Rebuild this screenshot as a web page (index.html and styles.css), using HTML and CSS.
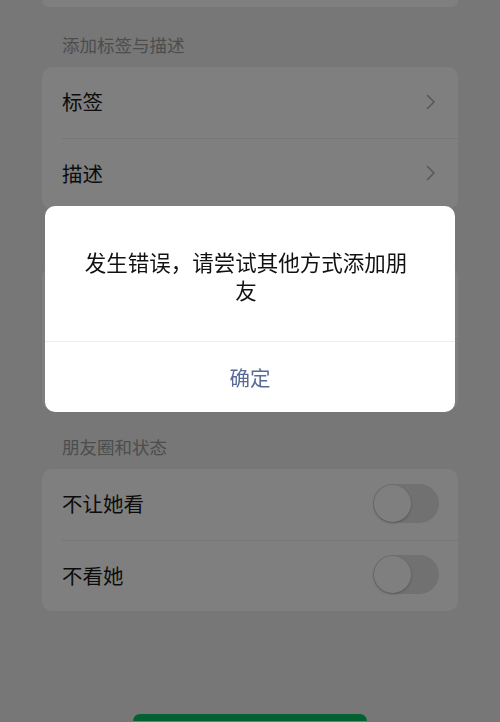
FILE: index.html
```html
<!DOCTYPE html>
<html lang="zh-CN">
<head>
<meta charset="utf-8">
<link rel="stylesheet" href="styles.css">
</head>
<body>
<div class="page">
  <div class="card stub"></div>

  <div class="label">添加标签与描述</div>
  <div class="card">
    <div class="row"><span class="txt">标签</span><svg class="chev" width="10" height="16" viewBox="0 0 10 16"><polyline points="1.5,1.5 8,8 1.5,14.5" fill="none" stroke="#b0b0b0" stroke-width="1.6" stroke-linecap="round" stroke-linejoin="round"/></svg></div>
    <div class="row"><span class="txt">描述</span><svg class="chev" width="10" height="16" viewBox="0 0 10 16"><polyline points="1.5,1.5 8,8 1.5,14.5" fill="none" stroke="#b0b0b0" stroke-width="1.6" stroke-linecap="round" stroke-linejoin="round"/></svg></div>
  </div>

  <div class="card hidden-card">
    <div class="row"></div>
    <div class="row"></div>
  </div>

  <div class="label">朋友圈和状态</div>
  <div class="card">
    <div class="row"><span class="txt">不让她看</span><span class="toggle"><span class="knob"></span></span></div>
    <div class="row"><span class="txt">不看她</span><span class="toggle"><span class="knob"></span></span></div>
  </div>

  <div class="btnwrap"><div class="greenbtn"></div></div>
</div>

<div class="overlay">
  <div class="dialog">
    <div class="msg">发生错误，请尝试其他方式添加朋友</div>
    <div class="ok">确定</div>
  </div>
</div>
</body>
</html>
```

FILE: styles.css
```css
* { box-sizing: border-box; }
html, body { margin: 0; padding: 0; }
body {
  width: 500px;
  height: 722px;
  overflow: hidden;
  background: #eeeeee;
  font-family: "Noto Sans CJK SC", "Noto Sans", sans-serif;
}
.page {
  padding: 0 42px;
}
.card {
  background: #ffffff;
  border-radius: 10px;
  margin-top: 10px;
  overflow: hidden;
}
.card.stub {
  height: 7px;
  margin-top: 0;
  border-radius: 0 0 10px 10px;
}
.card.hidden-card {
  margin-top: 58px;
}
.label {
  margin-top: 26px;
  padding-left: 20px;
  font-size: 17.5px;
  line-height: 24px;
  color: #9a9a9a;
}
.row {
  height: 71px;
  margin-left: 20px;
  padding-right: 20px;
  padding-bottom: 3px;
  display: flex;
  align-items: center;
  justify-content: space-between;
  border-top: 1px solid #ececec;
}
.row:first-child { border-top: none; }
.txt {
  font-size: 20.5px;
  color: #181818;
}
.chev { margin-right: 2px; margin-top: 1px; }
.toggle {
  width: 66px;
  height: 39px;
  border-radius: 20px;
  background: #e3e3e3;
  display: flex;
  align-items: center;
  padding-left: 1px;
  margin-right: -1px;
}
.knob {
  width: 37px;
  height: 37px;
  border-radius: 50%;
  background: #ffffff;
  box-shadow: 0 1px 3px rgba(0,0,0,0.25);
}
.btnwrap {
  display: flex;
  justify-content: center;
  margin-top: 103px;
}
.greenbtn {
  width: 234px;
  height: 7px;
  border-radius: 10px 10px 0 0;
  background: #07c160;
}
.overlay {
  position: fixed;
  inset: 0;
  background: rgba(0,0,0,0.5);
  display: flex;
  flex-direction: column;
  align-items: center;
  padding-top: 206px;
}
.dialog {
  width: 410px;
  background: #ffffff;
  border-radius: 10px;
  overflow: hidden;
}
.msg {
  padding: 42px 40px 37px 32px;
  font-size: 21.5px;
  line-height: 28px;
  text-align: center;
  color: #111111;
}
.ok {
  height: 71px;
  border-top: 1px solid #ededed;
  display: flex;
  align-items: center;
  justify-content: center;
  font-size: 20.5px;
  color: #576b95;
}
```
